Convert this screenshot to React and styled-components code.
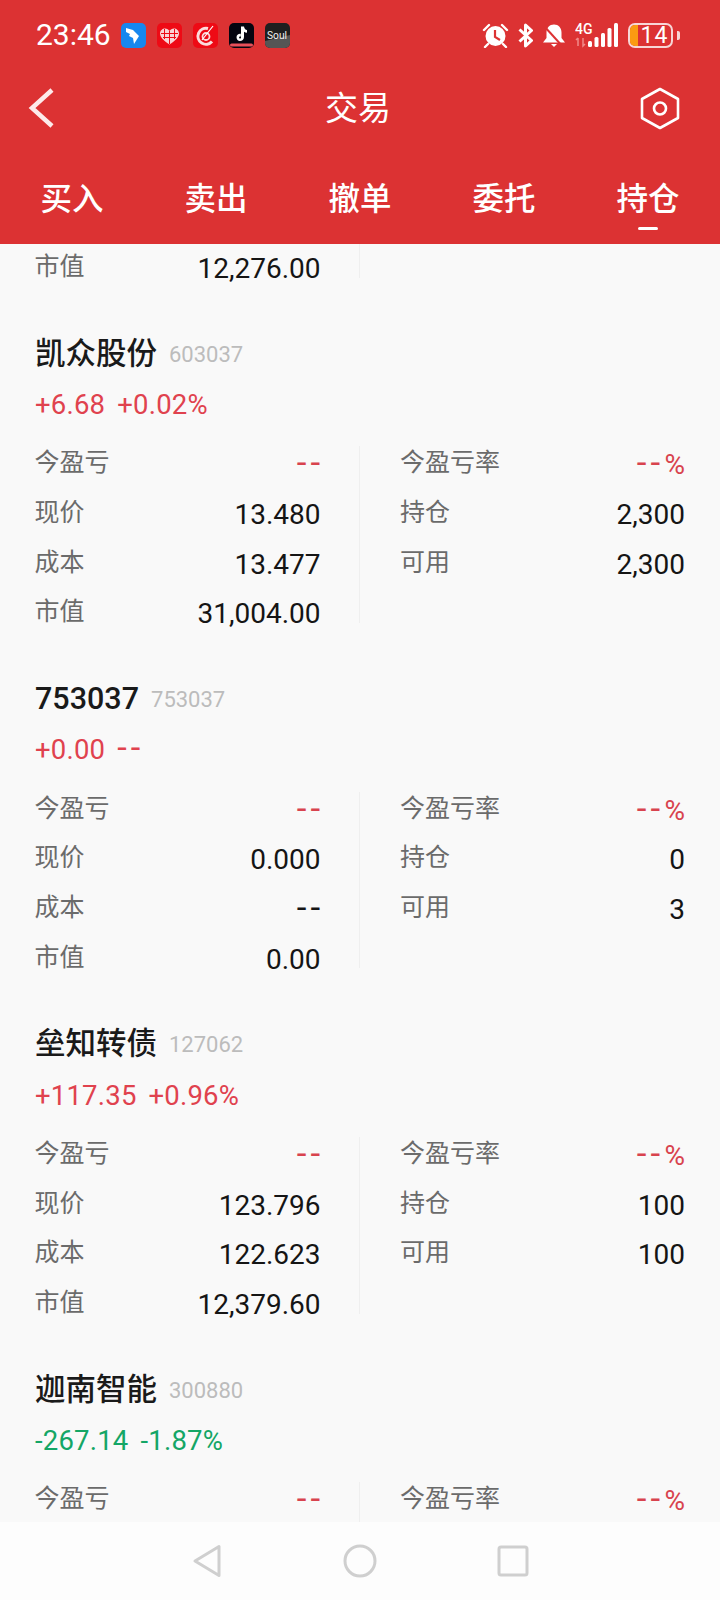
import React from 'react'
import styled, { createGlobalStyle } from 'styled-components'

const GlobalStyle = createGlobalStyle`
  html, body {
    margin: 0;
    padding: 0;
    background: #f9f9f9;
  }
  body {
    font-family: Roboto, "Noto Sans CJK SC", sans-serif;
  }
`

const Page = styled.div`
  width: 720px;
  height: 1600px;
  display: flex;
  flex-direction: column;
  overflow: hidden;
`

const Header = styled.header`
  height: 244px;
  flex: none;
  background: #dc3233;
  color: #fff;
  display: flex;
  flex-direction: column;
`

const StatusBar = styled.div`
  height: 70px;
  padding: 0 40px 0 36px;
  display: flex;
  align-items: center;
`

const Time = styled.span`
  font-size: 30px;
  font-weight: 400;
  width: 84.5px;
  line-height: 30px;
`

const AppIcons = styled.div`
  display: flex;
  gap: 11px;
`

const StatusRight = styled.div`
  margin-left: auto;
  display: flex;
  align-items: center;
  gap: 9px;
`

const Battery = styled.div`
  width: 45px;
  height: 25px;
  box-sizing: border-box;
  border: 2px solid #f7d6d6;
  border-radius: 7px;
  display: flex;
  align-items: stretch;
`

const BatteryFill = styled.div`
  width: 8px;
  background: #fb9b12;
  border-radius: 5px 0 0 5px;
`

const BatteryText = styled.span`
  flex: 1;
  font-size: 23px;
  font-weight: 400;
  line-height: 21px;
  text-align: center;
  letter-spacing: 1px;
`

const BatteryNub = styled.div`
  width: 3px;
  height: 9px;
  background: #f7d6d6;
  border-radius: 0 2px 2px 0;
  margin-left: -5px;
`

const NavBar = styled.div`
  height: 76px;
  padding: 0 40px 0 28px;
  display: grid;
  grid-template-columns: 1fr auto 1fr;
  align-items: center;
  justify-items: start;
`

const Title = styled.h1`
  margin: 0 0 4px 8px;
  font-family: "Noto Sans CJK SC", sans-serif;
  font-size: 33px;
  font-weight: 400;
  line-height: 40px;
`

const SettingsIcon = styled.svg`
  justify-self: end;
`

const Tabs = styled.nav`
  display: grid;
  grid-template-columns: repeat(5, 144px);
`

const Tab = styled.div`
  height: 98px;
  padding-top: 30px;
  box-sizing: border-box;
  display: flex;
  flex-direction: column;
  align-items: center;
  font-family: "Noto Sans CJK SC", sans-serif;
  font-size: 31.500px;
  font-weight: 500;
  line-height: 40px;
  &::after {
    content: '';
    display: ${p => (p.$active ? 'block' : 'none')};
    width: 20px;
    height: 3px;
    margin-top: 11px;
    background: #fff;
    border-radius: 2px;
  }
`

const Content = styled.main`
  flex: 1;
  min-height: 0;
  overflow: hidden;
`

const Stock = styled.section`
  padding-top: 53px;
`

const NameRow = styled.div`
  height: 40px;
  padding-left: 35px;
  display: flex;
  align-items: center;
  gap: 12px;
`

const Name = styled.span`
  font-family: Roboto, "Noto Sans CJK SC", sans-serif;
  font-size: 30.500px;
  font-weight: 500;
  color: #1a1a1a;
  padding-top: ${p => (p.$digits ? '5px' : '0')};
`

const Code = styled.span`
  font-size: 22px;
  color: #bcbcbc;
  padding-top: 7px;
`

const Change = styled.div`
  height: 40px;
  margin: 14px 0 21.700px;
  padding-left: 35px;
  display: flex;
  align-items: center;
  gap: 12px;
  font-size: 27.500px;
  letter-spacing: 0.200px;
  color: ${p => (p.$down ? '#14a666' : '#e0424e')};
`

const Grid = styled.div`
  display: grid;
  grid-template-columns: 360px 360px;
  min-height: ${p => p.$minHeight || 0}px;
`

const Column = styled.div`
  display: flex;
  flex-direction: column;
  gap: 22.100px;
  box-sizing: border-box;
  padding: ${p => p.$top || 0}px 39.500px 0 34.500px;
  &:nth-child(2) {
    border-left: 1px solid #efefef;
    padding-left: 40px;
    padding-right: 35px;
    margin-left: -1px;
  }
`

const Row = styled.div`
  height: 27.600px;
  display: flex;
  align-items: flex-start;
  justify-content: space-between;
`

const Label = styled.span`
  font-family: "Noto Sans CJK SC", sans-serif;
  font-size: 25px;
  line-height: 28px;
  color: #6b6b6b;
  white-space: nowrap;
`

const Value = styled.span`
  font-size: 28px;
  line-height: 28px;
  padding-top: 5px;
  color: ${p => (p.$red ? '#d8434e' : '#151515')};
  white-space: nowrap;
`

// the app's "--" is longer than a Roboto hyphen, so it sits a size up
const Dashes = styled.span`
  font-size: 1.250em;
  line-height: 0;
  letter-spacing: 0.120em;
  margin-right: ${p => (p.$trim ? '-4px' : '0')};
`

const BottomNav = styled.footer`
  height: 78px;
  flex: none;
  background: #fdfdfd;
  display: grid;
  grid-template-columns: repeat(3, 153px);
  justify-content: center;
  justify-items: center;
  align-items: center;
`

const AppTile = styled.svg`
  display: block;
  width: 25px;
  height: 25px;
`

const SoulText = styled.text`
  font-family: Roboto, sans-serif;
  font-size: 11px;
  font-weight: 400;
  fill: #f2f2f2;
`

function AppIconSet() {
  return (
    <AppIcons>
      <AppTile viewBox="0 0 25 25">
        <rect width="25" height="25" rx="5" fill="#1787ef" />
        <path d="M5 5l7 2 6 6-5 8-1-6-4-2 1-2-4-2z" fill="#fff" />
      </AppTile>
      <AppTile viewBox="0 0 25 25">
        <rect width="25" height="25" rx="5" fill="#ee0a15" />
        <path d="M12.500 21.500C6 17 3 14 3 10.500 3 7.500 5.500 5.500 8 5.500c2 0 3.500 1 4.500 2.500 1-1.500 2.500-2.500 4.500-2.500 2.500 0 5 2 5 5 0 3.500-3 6.500-9.500 11z" fill="#f9d3d5" />
        <path d="M7.500 6v10M12.500 8v13M17.500 6v10M4 10.500h17M6 14.500h13" stroke="#ee0a15" strokeWidth="1" fill="none" />
      </AppTile>
      <AppTile viewBox="0 0 25 25">
        <rect width="25" height="25" rx="5" fill="#ee0a15" />
        <path d="M15 5.500a8 8 0 1 0 4 13" fill="none" stroke="#fbdcdc" strokeWidth="3" />
        <circle cx="13" cy="13.500" r="3.500" fill="none" stroke="#fbdcdc" strokeWidth="1.800" />
        <path d="M20 3L9 17" stroke="#fff" strokeWidth="1.200" />
      </AppTile>
      <AppTile viewBox="0 0 25 25">
        <rect width="25" height="25" rx="5" fill="#050510" />
        <path d="M12 3.500h3c.2 2 1.500 3.300 3 3.500v2.800c-1.200 0-2.200-.4-3-1V14c0 2.600-2 4-4 4s-3.500-1.600-3.500-3.700c0-2.300 1.900-3.800 4.300-3.500v2.800c-1-.3-1.700.2-1.700.9 0 .6.500 1 1 1 .6 0 .9-.5.900-1.100z" fill="#fff" />
        <rect x="1" y="20.500" width="23" height="3" rx="1.500" fill="#e8505a" />
      </AppTile>
      <AppTile viewBox="0 0 25 25">
        <rect width="25" height="25" rx="5" fill="#1f1f1f" />
        <path d="M0 18l25-6v8a5 5 0 0 1-5 5H5a5 5 0 0 1-5-5z" fill="#555" />
        <SoulText x="2" y="16" textLength="20" lengthAdjust="spacingAndGlyphs">Soul</SoulText>
      </AppTile>
    </AppIcons>
  )
}

function StatusIcons() {
  return (
    <StatusRight>
      <svg width="27" height="25" viewBox="0 0 27 25">
        <circle cx="13.500" cy="13" r="10" fill="#fff" />
        <path d="M13 7v7l5 3" stroke="#dc3233" strokeWidth="2.200" fill="none" />
        <path d="M2 7l5-5M25 7l-5-5M6 21l-3 3M21 21l3 3" stroke="#fff" strokeWidth="2.400" fill="none" strokeLinecap="round" />
      </svg>
      <svg width="15" height="25" viewBox="0 0 15 25">
        <path d="M1.500 6.500l12 11L7.500 23V2l6 5.500-12 11" stroke="#fff" strokeWidth="3" fill="none" strokeLinejoin="round" />
      </svg>
      <svg width="24" height="25" viewBox="0 0 24 25">
        <path d="M12 1.500c4.500 0 7.500 3.500 7.500 8V15l3.500 4.500H1L4.500 15V9.500c0-4.500 3-8 7.500-8z" fill="#fff" />
        <path d="M9 21h6l-3 3z" fill="#fff" />
        <path d="M2 3l20 22" stroke="#dc3233" strokeWidth="2" />
      </svg>
      <svg width="44" height="26" viewBox="0 0 44 26">
        <text x="0" y="12" fontFamily="Roboto, sans-serif" fontSize="14" fontWeight="500" fill="#fff">4G</text>
        <path d="M3 16v8M1 18l2-2M8 16v8l2-2" stroke="#f08a8a" strokeWidth="1.500" fill="none" />
        <rect x="13" y="19" width="4" height="6" rx="1.500" fill="#fff" />
        <rect x="19.500" y="15" width="4" height="10" rx="1.500" fill="#fff" />
        <rect x="26" y="11" width="4" height="14" rx="1.500" fill="#fff" />
        <rect x="32.500" y="6" width="4" height="19" rx="1.500" fill="#fff" />
        <rect x="39" y="1" width="4" height="24" rx="1.500" fill="#fff" />
      </svg>
      <Battery>
        <BatteryFill />
        <BatteryText>14</BatteryText>
      </Battery>
      <BatteryNub />
    </StatusRight>
  )
}

const tabs = ['买入', '卖出', '撤单', '委托', '持仓']

const stocks = [
  {
    name: '凯众股份', code: '603037', change: '+6.68', percent: '+0.02%',
    left: [['现价', '13.480'], ['成本', '13.477'], ['市值', '31,004.00']],
    right: [['持仓', '2,300'], ['可用', '2,300']],
  },
  {
    name: '753037', code: '753037', change: '+0.00', percent: '--',
    left: [['现价', '0.000'], ['成本', '--'], ['市值', '0.00']],
    right: [['持仓', '0'], ['可用', '3']],
  },
  {
    name: '垒知转债', code: '127062', change: '+117.35', percent: '+0.96%',
    left: [['现价', '123.796'], ['成本', '122.623'], ['市值', '12,379.60']],
    right: [['持仓', '100'], ['可用', '100']],
  },
  {
    name: '迦南智能', code: '300880', change: '-267.14', percent: '-1.87%', down: true,
    left: [],
    right: [],
  },
]

function StockCard({ stock }) {
  return (
    <Stock>
      <NameRow>
        <Name $digits={/^\d/.test(stock.name)}>{stock.name}</Name>
        <Code>{stock.code}</Code>
      </NameRow>
      <Change $down={stock.down}>
        <span>{stock.change}</span>
        <span>{stock.percent === '--' ? <Dashes>--</Dashes> : stock.percent}</span>
      </Change>
      <Grid $minHeight={176.7}>
        <Column>
          <Row>
            <Label>今盈亏</Label>
            <Value $red><Dashes $trim>--</Dashes></Value>
          </Row>
          {stock.left.map(([label, value]) => (
            <Row key={label}>
              <Label>{label}</Label>
              <Value>{value === '--' ? <Dashes $trim>--</Dashes> : value}</Value>
            </Row>
          ))}
        </Column>
        <Column>
          <Row>
            <Label>今盈亏率</Label>
            <Value $red><Dashes>--</Dashes>%</Value>
          </Row>
          {stock.right.map(([label, value]) => (
            <Row key={label}>
              <Label>{label}</Label>
              <Value>{value}</Value>
            </Row>
          ))}
        </Column>
      </Grid>
    </Stock>
  )
}

export default function App() {
  return (
    <Page>
      <GlobalStyle />
      <Header>
        <StatusBar>
          <Time>23:46</Time>
          <AppIconSet />
          <StatusIcons />
        </StatusBar>
        <NavBar>
          <svg width="28" height="42" viewBox="0 0 28 42">
            <path d="M24 3L4 21l20 18" stroke="#fdeaea" strokeWidth="4.500" fill="none" />
          </svg>
          <Title>交易</Title>
          <SettingsIcon width="40" height="43" viewBox="0 0 40 43">
            <path d="M20 2l18 10v19L20 41 2 31V12z" stroke="#fff" strokeWidth="2.600" fill="none" strokeLinejoin="round" />
            <circle cx="20" cy="21.500" r="6" stroke="#fff" strokeWidth="2.600" fill="none" />
          </SettingsIcon>
        </NavBar>
        <Tabs>
          {tabs.map(t => (
            <Tab key={t} $active={t === '持仓'}>{t}</Tab>
          ))}
        </Tabs>
      </Header>
      <Content>
        <Grid>
          <Column $top={6}>
            <Row>
              <Label>市值</Label>
              <Value>12,276.00</Value>
            </Row>
          </Column>
          <Column />
        </Grid>
        {stocks.map(s => (
          <StockCard key={s.code} stock={s} />
        ))}
      </Content>
      <BottomNav>
        <svg width="30" height="34" viewBox="0 0 30 34">
          <path d="M27 2.500v29L3 17z" stroke="#cfcfcf" strokeWidth="3" fill="none" strokeLinejoin="round" />
        </svg>
        <svg width="34" height="34" viewBox="0 0 34 34">
          <circle cx="17" cy="17" r="15" stroke="#cfcfcf" strokeWidth="3" fill="none" />
        </svg>
        <svg width="32" height="32" viewBox="0 0 32 32">
          <rect x="2" y="2" width="28" height="28" rx="2" stroke="#cfcfcf" strokeWidth="3" fill="none" />
        </svg>
      </BottomNav>
    </Page>
  )
}
